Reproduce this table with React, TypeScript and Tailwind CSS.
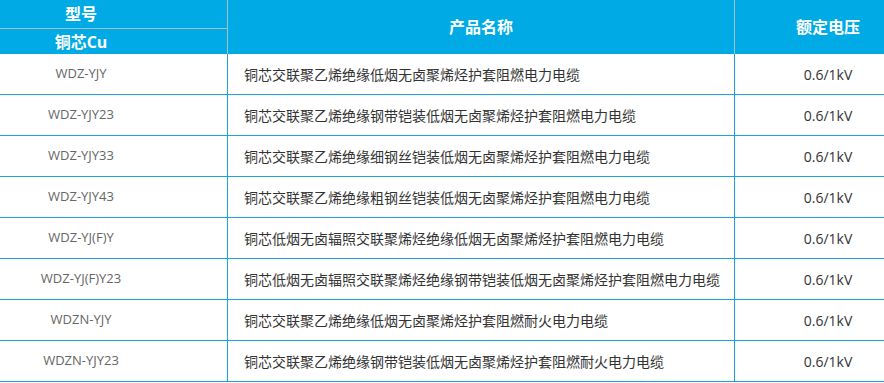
import React from 'react';

interface CableRow {
  model: string;
  name: string;
  voltage: string;
}

const rows: CableRow[] = [
  { model: 'WDZ-YJY', name: '铜芯交联聚乙烯绝缘低烟无卤聚烯烃护套阻燃电力电缆', voltage: '0.6/1kV' },
  { model: 'WDZ-YJY23', name: '铜芯交联聚乙烯绝缘钢带铠装低烟无卤聚烯烃护套阻燃电力电缆', voltage: '0.6/1kV' },
  { model: 'WDZ-YJY33', name: '铜芯交联聚乙烯绝缘细钢丝铠装低烟无卤聚烯烃护套阻燃电力电缆', voltage: '0.6/1kV' },
  { model: 'WDZ-YJY43', name: '铜芯交联聚乙烯绝缘粗钢丝铠装低烟无卤聚烯烃护套阻燃电力电缆', voltage: '0.6/1kV' },
  { model: 'WDZ-YJ(F)Y', name: '铜芯低烟无卤辐照交联聚烯烃绝缘低烟无卤聚烯烃护套阻燃电力电缆', voltage: '0.6/1kV' },
  { model: 'WDZ-YJ(F)Y23', name: '铜芯低烟无卤辐照交联聚烯烃绝缘钢带铠装低烟无卤聚烯烃护套阻燃电力电缆', voltage: '0.6/1kV' },
  { model: 'WDZN-YJY', name: '铜芯交联聚乙烯绝缘低烟无卤聚烯烃护套阻燃耐火电力电缆', voltage: '0.6/1kV' },
  { model: 'WDZN-YJY23', name: '铜芯交联聚乙烯绝缘钢带铠装低烟无卤聚烯烃护套阻燃耐火电力电缆', voltage: '0.6/1kV' },
];

const App: React.FC = () => {
  return (
    <div
      className="w-[884px] h-[383px] overflow-hidden bg-white"
      style={{ fontFamily: '"Open Sans", "Noto Sans CJK SC", sans-serif' }}
    >
      {/* table is scrolled sideways a little, so both outer columns are cut off */}
      <div className="w-[986px] -ml-[65px]">
        {/* Header */}
        <div className="flex h-[54px] bg-[#00aae4] text-white font-bold text-[16px]">
          <div className="w-[293px] flex flex-col border-r border-[#a6bfcd]">
            <div className="h-[29px] flex items-center justify-center border-b border-[#a6bfcd]">型号</div>
            <div className="flex-1 flex items-center justify-center">铜芯Cu</div>
          </div>
          <div className="w-[507px] flex items-center justify-center border-r border-[#a6bfcd]">产品名称</div>
          <div className="flex-1 flex items-center justify-center">额定电压</div>
        </div>

        {/* Body */}
        {rows.map((row) => (
          <div key={row.model} className="flex h-[41px] border-b border-[#18a4dc]">
            <div className="w-[293px] flex items-center justify-center border-r border-[#18a4dc] text-[13px] text-[#666]">
              {row.model}
            </div>
            <div className="w-[507px] flex items-center pl-[16px] border-r border-[#18a4dc] text-[14px] text-[#333]">
              {row.name}
            </div>
            <div className="flex-1 flex items-center justify-center text-[14px] text-[#333]">{row.voltage}</div>
          </div>
        ))}
      </div>
    </div>
  );
};

export default App;
